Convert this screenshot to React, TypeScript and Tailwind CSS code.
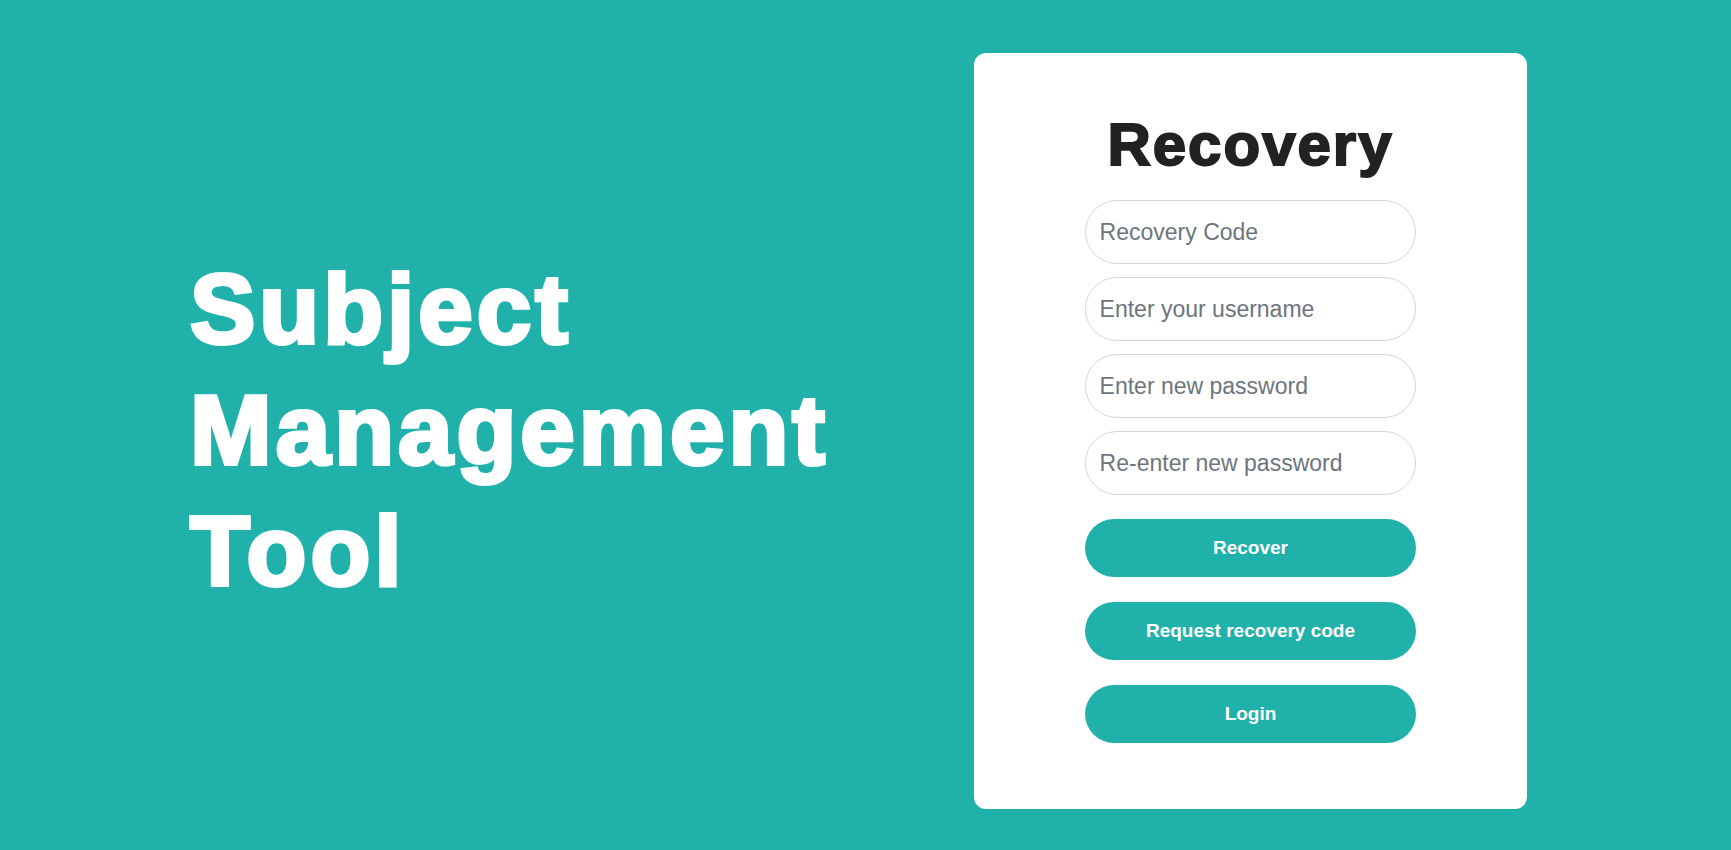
import React from "react";

export default function App() {
  const fields = [
    "Recovery Code",
    "Enter your username",
    "Enter new password",
    "Re-enter new password",
  ];
  const buttons = ["Recover", "Request recovery code", "Login"];
  return (
    <div className="w-full h-[850px] bg-[#20b2aa] flex font-['Liberation_Sans',Arial,sans-serif] overflow-hidden">
      <div className="w-[974px] h-full pl-[190px] pt-[249px]">
        <h1 className="text-white font-bold text-[98px] leading-[121px] tracking-[4px] [-webkit-text-stroke:4px_white]">
          Subject
          <br />
          Management
          <br />
          Tool
        </h1>
      </div>
      <div className="w-[553px] h-[756px] mt-[53px] bg-white rounded-[12px] flex flex-col items-center pt-[62px]">
        <h2 className="text-[#222222] font-bold text-[60px] leading-[60px] tracking-[2px] [-webkit-text-stroke:2px_#222222]">
          Recovery
        </h2>
        <div className="w-[60%] flex flex-col gap-[13px] mt-[25px]">
          {fields.map((f) => (
            <input
              key={f}
              type={f.includes("password") ? "password" : "text"}
              placeholder={f}
              className="h-[64px] w-full rounded-full border border-[#d6d6d6] bg-white px-[14px] text-[23px] text-[#333] placeholder:text-[#6c757d] outline-none"
            />
          ))}
        </div>
        <div className="w-[60%] flex flex-col gap-[25px] mt-[24px]">
          {buttons.map((b) => (
            <button
              key={b}
              className="h-[58px] w-full rounded-full bg-[#20b2aa] text-white font-bold text-[19px]"
            >
              {b}
            </button>
          ))}
        </div>
      </div>
    </div>
  );
}
